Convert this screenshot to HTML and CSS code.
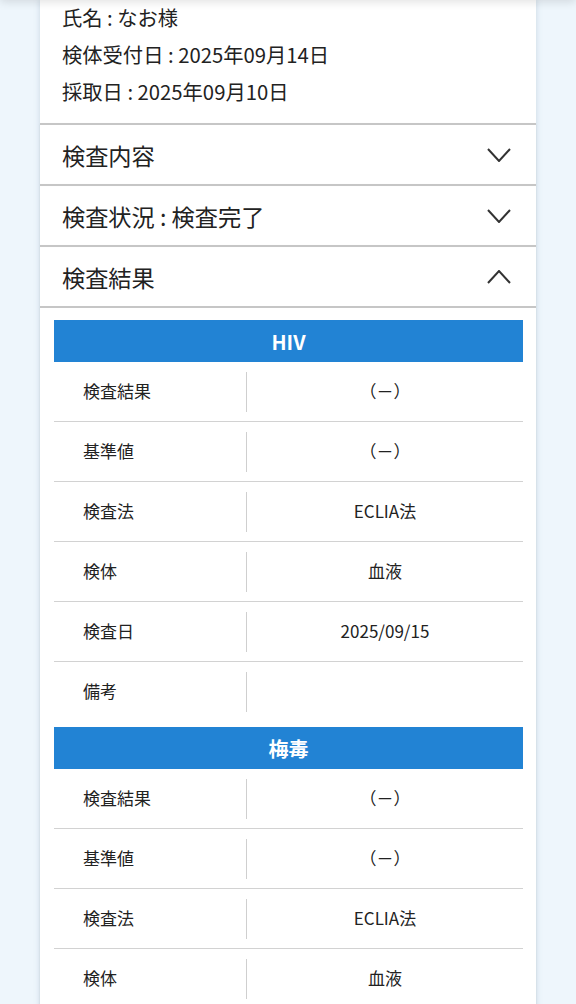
FILE: index.html
```html
<!DOCTYPE html>
<html lang="ja">
<head>
    <meta charset="UTF-8">
    <meta name="viewport" content="width=device-width, initial-scale=1.0">
    <title>検査結果</title>
    <link rel="stylesheet" href="styles.css">
</head>
<body>
    <div class="top-shadow"></div>
    <div class="card">
        <div class="info">
            <p>氏名 : なお様</p>
            <p>検体受付日 : 2025年09月14日</p>
            <p>採取日 : 2025年09月10日</p>
        </div>

        <div class="acc-item">
            <div class="acc-head">
                <span>検査内容</span>
                <svg class="chevron" width="26" height="14" viewBox="0 0 26 14"><polyline points="2,1 13,13 24,1" /></svg>
            </div>
        </div>
        <div class="acc-item">
            <div class="acc-head">
                <span>検査状況 : 検査完了</span>
                <svg class="chevron" width="26" height="14" viewBox="0 0 26 14"><polyline points="2,1 13,13 24,1" /></svg>
            </div>
        </div>
        <div class="acc-item open">
            <div class="acc-head">
                <span>検査結果</span>
                <svg class="chevron" width="26" height="14" viewBox="0 0 26 14"><polyline points="2,13 13,1 24,13" /></svg>
            </div>
            <div class="acc-body" id="results"></div>
        </div>
    </div>

    <script>
        const tests = [
            { name: 'HIV', rows: [['検査結果', '（－）'], ['基準値', '（－）'], ['検査法', 'ECLIA法'], ['検体', '血液'], ['検査日', '2025/09/15'], ['備考', '']] },
            { name: '梅毒', rows: [['検査結果', '（－）'], ['基準値', '（－）'], ['検査法', 'ECLIA法'], ['検体', '血液'], ['検査日', '2025/09/15'], ['備考', '']] }
        ];

        const results = document.getElementById('results');
        tests.forEach((test) => {
            const table = document.createElement('table');
            table.className = 'result-table';
            const head = table.insertRow();
            const th = document.createElement('th');
            th.colSpan = 2;
            th.textContent = test.name;
            head.appendChild(th);

            test.rows.forEach(([label, value]) => {
                const row = table.insertRow();
                const labelCell = row.insertCell();
                labelCell.className = 'label';
                labelCell.innerHTML = '<div class="cell">' + label + '</div>';
                const valueCell = row.insertCell();
                valueCell.className = 'value';
                valueCell.innerHTML = '<div class="cell">' + value + '</div>';
            });
            results.appendChild(table);
        });
    </script>
</body>
</html>
```

FILE: styles.css
```css
body {
    margin: 0;
    background-color: #eef6fc;
    font-family: "Noto Sans CJK JP", "Noto Sans", sans-serif;
    color: #222;
}
.top-shadow {
    position: fixed;
    top: -20px;
    left: 0;
    right: 0;
    height: 20px;
    box-shadow: 0 2px 10px rgba(0, 0, 0, 0.12);
    z-index: 2;
}
.card {
    width: 496px;
    margin: -1px auto 0;
    background-color: #fff;
    box-shadow: 0 0 6px rgba(90, 120, 150, 0.25);
}
.info {
    padding: 0 22px 13px;
}
.info p {
    margin: 0;
    font-size: 20.3px;
    line-height: 37px;
}
.acc-item {
    border-top: 2px solid #c6c6c6;
    box-shadow: 0 1px 2px rgba(0, 0, 0, 0.08);
}
.acc-head {
    height: 59px;
    display: flex;
    align-items: center;
    justify-content: space-between;
    padding: 0 24px 0 22px;
    font-size: 23.2px;
}
.chevron {
    fill: none;
    stroke: #333;
    stroke-width: 2;
}
.acc-body {
    border-top: 2px solid #c6c6c6;
    padding: 12px 13px 0 14px;
}
.result-table {
    width: 100%;
    border-collapse: collapse;
    margin-bottom: 6px;
}
.result-table th {
    height: 42px;
    padding: 0;
    background-color: #2283d4;
    color: #fff;
    font-size: 20px;
    font-weight: bold;
    text-align: center;
}
.result-table td {
    height: 59px;
    padding: 0;
    border-bottom: 1px solid #d2d2d2;
    font-size: 17px;
}
.result-table tr:last-child td {
    border-bottom: none;
}
.result-table .cell {
    height: 40px;
    display: flex;
    align-items: center;
    padding-bottom: 3px;
    box-sizing: border-box;
}
.result-table .label {
    width: 193px;
}
.result-table .label .cell {
    padding-left: 29px;
    border-right: 1px solid #cfcfcf;
}
.result-table .value .cell {
    justify-content: center;
}
```
